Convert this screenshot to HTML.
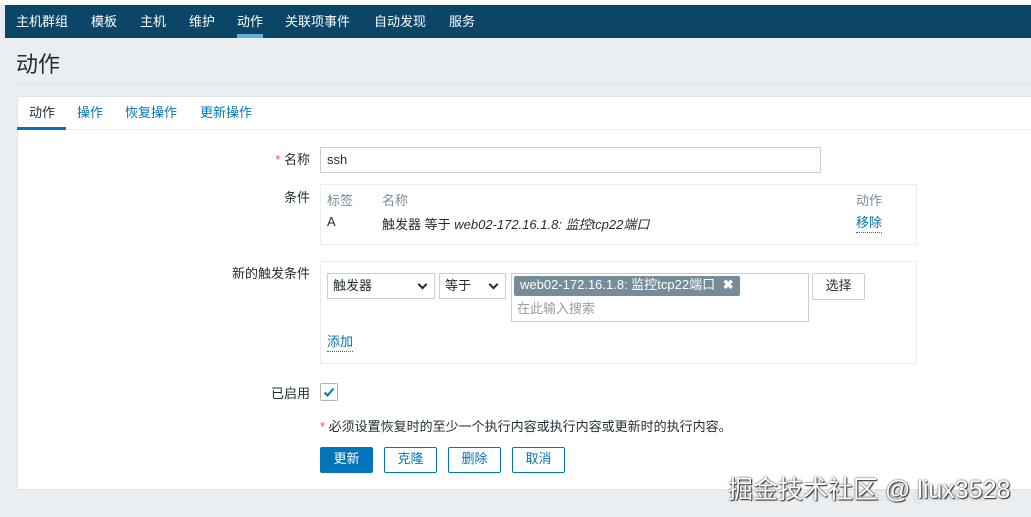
<!DOCTYPE html>
<html><head><meta charset="utf-8"><style>
*{box-sizing:border-box;margin:0;padding:0}
body{width:1031px;height:517px;overflow:hidden;background:#ebeef0;font-family:"Liberation Sans","Noto Sans CJK SC",sans-serif;font-size:13px;color:#1f2c33;position:relative}
.abs{position:absolute}
.top{left:0;top:0;width:1031px;height:5px;background:#fff}
.nav{left:5px;top:5px;width:1026px;height:33px;background:#0b4568}
.nav span{position:absolute;top:6px;color:#fff;font-size:13px}
.navu{left:237px;top:34px;width:26px;height:4px;background:#5eb0e5}
.title{left:16px;top:47px;font-size:22px;color:#1f2c33}
.hr{left:16px;top:83px;width:1015px;height:1px;background:#dde1e4}
.card{left:17px;top:96px;width:1014px;height:394px;background:#fff;border:1px solid #dfe4e7;border-right:none}
.tab{top:102px;font-size:13px;color:#0275b8}
.tabline{left:17px;top:129px;width:1014px;height:1px;background:#ebeef0}
.tabu{left:17px;top:127px;width:49px;height:3px;background:#0275b8}
.lbl{font-size:13px;text-align:right;width:80px}
.inp{border:1px solid #c9ced1;background:#fff}
.box{border:1px solid #ebeef0;background:#fff}
.gray{color:#768d99}
.link{color:#0275b8;border-bottom:1px dotted #0275b8}
.btn{border:1px solid #0275b8;border-radius:2px;color:#0275b8;background:#fff;text-align:center;line-height:22px;height:26px}
.sel{border:1px solid #c9ced1;height:26px;line-height:23px;padding-left:5px}
.sel i{position:absolute;right:8px;top:7px;width:7px;height:7px;border-right:2px solid #1f2c33;border-bottom:2px solid #1f2c33;transform:rotate(45deg)}
</style></head><body>
<div class="abs top"></div>
<div class="abs nav">
<span style="left:11px">主机群组</span><span style="left:86px">模板</span><span style="left:135px">主机</span><span style="left:184px">维护</span><span style="left:232px">动作</span><span style="left:280px">关联项事件</span><span style="left:369px">自动发现</span><span style="left:444px">服务</span>
</div>
<div class="abs navu"></div>
<div class="abs title">动作</div>
<div class="abs hr"></div>
<div class="abs card"></div>
<div class="abs tabline"></div>
<div class="abs tabu"></div>
<div class="abs tab" style="left:29px;color:#1f2c33">动作</div>
<div class="abs tab" style="left:77px">操作</div>
<div class="abs tab" style="left:125px">恢复操作</div>
<div class="abs tab" style="left:200px">更新操作</div>

<div class="abs lbl" style="left:230px;top:149px"><span style="color:#e45959">*</span> 名称</div>
<div class="abs inp" style="left:320px;top:147px;width:501px;height:26px;padding:4px 6px 0">ssh</div>

<div class="abs lbl" style="left:230px;top:187px">条件</div>
<div class="abs box" style="left:320px;top:184px;width:597px;height:61px"></div>
<div class="abs gray" style="left:327px;top:190px">标签</div>
<div class="abs gray" style="left:382px;top:190px">名称</div>
<div class="abs gray" style="left:856px;top:190px">动作</div>
<div class="abs" style="left:327px;top:214px">A</div>
<div class="abs" style="left:382px;top:214px">触发器 等于 <i>web02-172.16.1.8: 监控tcp22端口</i></div>
<div class="abs link" style="left:856px;top:214px;line-height:18px">移除</div>

<div class="abs lbl" style="left:230px;top:263px">新的触发条件</div>
<div class="abs box" style="left:320px;top:261px;width:597px;height:103px"></div>
<div class="abs sel" style="left:327px;top:273px;width:108px">触发器<i></i></div>
<div class="abs sel" style="left:439px;top:273px;width:67px">等于<i></i></div>
<div class="abs inp" style="left:511px;top:273px;width:298px;height:49px"></div>
<div class="abs" style="left:514px;top:276px;height:20px;line-height:18px;padding:0 6px;background:#768d99;color:#fff;border-radius:2px">web02-172.16.1.8: 监控tcp22端口 <b style="margin-left:4px">✖</b></div>
<div class="abs" style="left:517px;top:298px;color:#979fa5">在此输入搜索</div>
<div class="abs inp" style="left:812px;top:273px;width:53px;height:27px;line-height:23px;text-align:center;border-radius:2px">选择</div>
<div class="abs link" style="left:327px;top:333px;line-height:18px">添加</div>

<div class="abs lbl" style="left:230px;top:383px">已启用</div>
<div class="abs" style="left:320px;top:383px;width:18px;height:18px;border:1px solid #aeb6ba;border-radius:2px"><svg width="16" height="16" viewBox="0 0 16 16"><path d="M3.5 8.5 L6.5 11.5 L12.5 4.5" fill="none" stroke="#0275b8" stroke-width="2"/></svg></div>

<div class="abs" style="left:320px;top:416px"><span style="color:#e45959">*</span> 必须设置恢复时的至少一个执行内容或执行内容或更新时的执行内容。</div>
<div class="abs btn" style="left:320px;top:447px;width:53px;background:#0275b8;color:#fff">更新</div>
<div class="abs btn" style="left:384px;top:447px;width:53px">克隆</div>
<div class="abs btn" style="left:448px;top:447px;width:53px">删除</div>
<div class="abs btn" style="left:512px;top:447px;width:53px">取消</div>

<div class="abs" style="left:862px;top:488px;font-size:16px;color:#d8dcdf">CSDN @liux3528</div>
<div class="abs" style="left:728px;top:470px;font-size:25px;color:#fff;text-shadow:0 0 2px #333,1px 1px 1px #333">掘金技术社区 @ liux3528</div>
</body></html>
